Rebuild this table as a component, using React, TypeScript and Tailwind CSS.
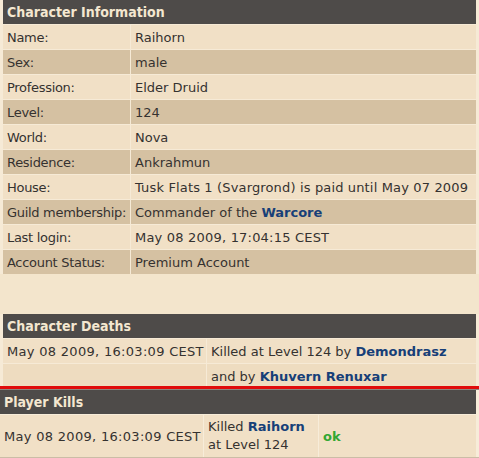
import { ReactNode } from 'react';

const font = { fontFamily: '"DejaVu Sans", Verdana, sans-serif' };
const headFont = { fontFamily: '"DejaVu Sans Condensed", "DejaVu Sans", Tahoma, sans-serif' };

interface InfoRowProps {
  label: string;
  children: ReactNode;
  dark?: boolean;
}

function InfoRow({ label, children, dark }: InfoRowProps) {
  const bg = dark ? 'bg-[#d5c1a2]' : 'bg-[#f1e0c6]';
  return (
    <div className="grid grid-cols-[127px_1fr] gap-px h-[24px]">
      <div className={`${bg} pl-[4px] flex items-center whitespace-nowrap tracking-[-0.3px]`}>{label}</div>
      <div className={`${bg} pl-[4px] flex items-center whitespace-nowrap`}>{children}</div>
    </div>
  );
}

function Header({ title }: { title: string }) {
  return (
    <div
      className="h-[24px] bg-[#4e4b49] text-[#f4e7d0] font-bold text-[14px] pl-[4px] flex items-center"
      style={headFont}
    >
      {title}
    </div>
  );
}

function CharLink({ children }: { children: ReactNode }) {
  return <span className="font-bold text-[#173f78]">{children}</span>;
}

export default function App() {
  return (
    <div
      className="w-[479px] h-[458px] overflow-hidden bg-[#f3e5cc] text-[13px] text-[#353230] leading-none"
      style={font}
    >
      <div className="pl-[3px] pr-[3px] flex flex-col gap-px bg-[#f6ead6]">
        <Header title="Character Information" />
        <InfoRow label="Name:">Raihorn</InfoRow>
        <InfoRow label="Sex:" dark>male</InfoRow>
        <InfoRow label="Profession:">Elder Druid</InfoRow>
        <InfoRow label="Level:" dark>124</InfoRow>
        <InfoRow label="World:">Nova</InfoRow>
        <InfoRow label="Residence:" dark>Ankrahmun</InfoRow>
        <InfoRow label="House:">
          <span className="tracking-[0.15px]">Tusk Flats 1 (Svargrond) is paid until May 07 2009</span>
        </InfoRow>
        <InfoRow label="Guild membership:" dark>
          Commander of the&nbsp;<CharLink>Warcore</CharLink>
        </InfoRow>
        <InfoRow label="Last login:">
          <span className="tracking-[0.2px]">May 08 2009, 17:04:15 CEST</span>
        </InfoRow>
        <InfoRow label="Account Status:" dark>Premium Account</InfoRow>
      </div>

      <div className="h-[40px]" />

      <div className="pl-[3px] pr-[3px] flex flex-col gap-px bg-[#f6ead6]">
        <Header title="Character Deaths" />
        <div className="grid grid-cols-[203px_1fr] gap-px h-[24px]">
          <div className="bg-[#f1e0c6] pl-[4px] flex items-center whitespace-nowrap tracking-[0.3px]">
            May 08 2009, 16:03:09 CEST
          </div>
          <div className="bg-[#f1e0c6] pl-[4px] flex items-center whitespace-nowrap">
            Killed at Level 124 by&nbsp;<CharLink>Demondrasz</CharLink>
          </div>
        </div>
        <div className="grid grid-cols-[203px_1fr] gap-px h-[22px]">
          <div className="bg-[#eedcc0]" />
          <div className="bg-[#eedcc0] pl-[4px] flex items-center pt-[2px] whitespace-nowrap">
            and by&nbsp;<CharLink>Khuvern Renuxar</CharLink>
          </div>
        </div>
      </div>

      <div className="h-[3px] bg-[#e00b0b]" />
      <div className="h-px bg-[#8a8580]" />

      <div className="pr-[3px] flex flex-col gap-px bg-[#f7ecd9]">
        <Header title="Player Kills" />
        <div className="grid grid-cols-[203px_114px_1fr] gap-px h-[42px]">
          <div className="bg-[#f1e0c6] pl-[4px] flex items-center whitespace-nowrap tracking-[0.3px]">
            May 08 2009, 16:03:09 CEST
          </div>
          <div className="bg-[#f1e0c6] pl-[4px] flex flex-col justify-center leading-[18px] whitespace-nowrap">
            <div>
              Killed <CharLink>Raihorn</CharLink>
            </div>
            <div>at Level 124</div>
          </div>
          <div className="bg-[#f1e0c6] pl-[4px] flex items-center font-bold text-[#33a733]">ok</div>
        </div>
      </div>
      <div className="h-px bg-[#cbbda6]" />
    </div>
  );
}
